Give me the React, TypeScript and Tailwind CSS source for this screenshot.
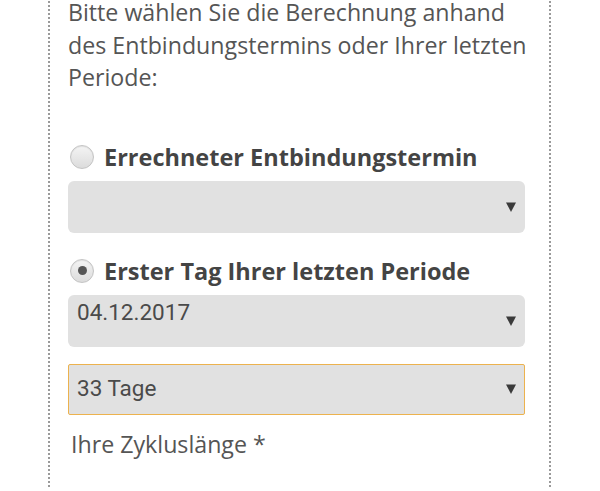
import React from "react";

function Radio({ checked }: { checked?: boolean }) {
  return (
    <span className="flex h-[24px] w-[24px] shrink-0 items-center justify-center rounded-full border border-[#c4c4c4] bg-gradient-to-b from-[#f4f4f4] to-[#dcdcdc] shadow-[inset_0_1px_1px_rgba(0,0,0,0.08)]">
      {checked && <span className="h-[9px] w-[9px] rounded-full bg-[#555]" />}
    </span>
  );
}

function Arrow() {
  return (
    <svg width="10" height="10" viewBox="0 0 10 10" className="shrink-0">
      <path d="M0 0.5 L10 0.5 L5 10 Z" fill="#3a3a3a" />
    </svg>
  );
}

export default function App() {
  const body = { fontFamily: '"Open Sans", "Noto Sans", sans-serif' };
  const roboto = { fontFamily: 'Roboto, "Liberation Sans", sans-serif' };

  return (
    <div className="h-[491px] overflow-hidden bg-white">
      <div className="ml-[48px] h-full w-[503px] border-x-2 border-dotted border-[#9a9a9a] pl-[18px] pr-[14px]">
        <p style={body} className="-mt-[4px] text-[23.2px] leading-[32.5px] text-[#555]">
          Bitte wählen Sie die Berechnung anhand des Entbindungstermins oder Ihrer letzten Periode:
        </p>

        <label style={body} className="mt-[47px] flex items-center gap-[10px] pl-[2px] text-[23.5px] leading-[32px] font-bold text-[#444]">
          <Radio />
          Errechneter Entbindungstermin
        </label>
        <div className="mt-[8px] flex h-[52px] w-[457px] items-center justify-end rounded-[6px] bg-[#e1e1e1] pr-[9px]">
          <Arrow />
        </div>

        <label style={body} className="mt-[22px] flex items-center gap-[10px] pl-[2px] text-[23.5px] leading-[32px] font-bold text-[#444]">
          <Radio checked />
          Erster Tag Ihrer letzten Periode
        </label>
        <div className="mt-[8px] flex h-[52px] w-[457px] rounded-[6px] bg-[#e1e1e1] pl-[9px] pr-[9px]">
          <span style={roboto} className="flex-1 pt-[1px] text-[22.5px] text-[#4a4a4a]">04.12.2017</span>
          <span className="flex items-center">
            <Arrow />
          </span>
        </div>

        <div className="mt-[17px] flex h-[51px] w-[457px] items-center rounded-[2px] border-[1.5px] border-[#ecb24e] bg-[#e1e1e1] pl-[8px] pr-[8px]">
          <span style={roboto} className="flex-1 text-[22.5px] text-[#4a4a4a]">33 Tage</span>
          <Arrow />
        </div>

        <p style={body} className="mt-[13px] pl-[3px] text-[23.2px] leading-[32.5px] text-[#555]">Ihre Zykluslänge *</p>
      </div>
    </div>
  );
}
